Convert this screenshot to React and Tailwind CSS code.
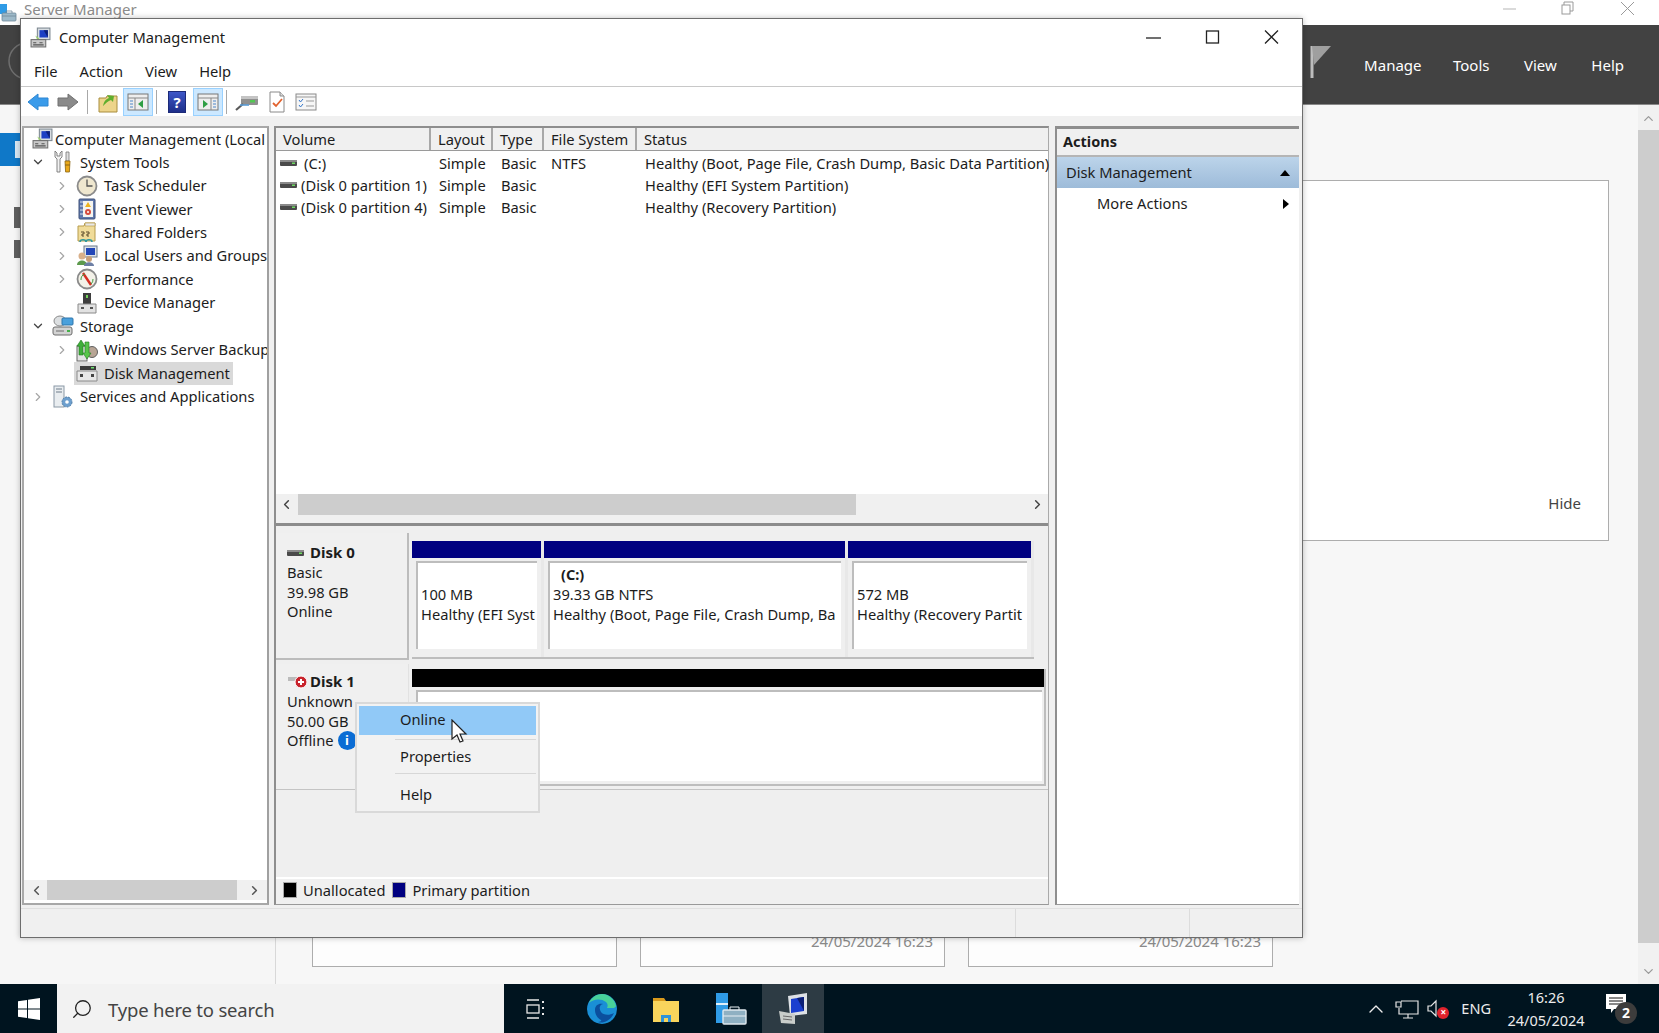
import React from "react";
import { ChevronRight, ChevronDown, ChevronLeft, ChevronUp, Search } from "lucide-react";

const PC = ({ s = 20 }) => (
  <svg width={s} height={s} viewBox="0 0 20 20" className="shrink-0">
    <rect x="7" y="1" width="12" height="11" fill="#d8dde2" stroke="#7c8790" />
    <path d="M9 3h8v7H9z" fill="#1c3fc4" />
    <path d="M13 3h4v7z" fill="#0c1f7a" />
    <path d="M5 8l4 3-2 1z" fill="#9bd06a" />
    <rect x="1" y="12" width="14" height="7" fill="#c9c9c9" stroke="#6e6e6e" />
    <path d="M3 15h3M9 15h3M3 17h10" stroke="#555" />
  </svg>
);
const Tools = () => (
  <svg width="22" height="24" viewBox="0 0 22 24" className="shrink-0">
    <path d="M3 1v6l2 2v13h3V9l2-2V1l-2 2v3H5V3z" fill="#f2f2f2" stroke="#777" strokeWidth=".9" />
    <path d="M14 2h3v9h-3z" fill="#e0e0e0" stroke="#777" strokeWidth=".8" />
    <path d="M13 11h5l-.6 11h-3.8z" fill="#eaa91a" stroke="#8a6512" strokeWidth=".8" />
    <path d="M13 15h5" stroke="#8a6512" />
  </svg>
);
const Clock = () => (
  <svg width="22" height="22" viewBox="0 0 22 22" className="shrink-0">
    <circle cx="11" cy="11" r="9.5" fill="#efe7cf" stroke="#8b8b8b" strokeWidth="1.8" />
    <path d="M11 4.5V11h5.5" stroke="#565656" strokeWidth="1.3" fill="none" />
  </svg>
);
const Evt = () => (
  <svg width="20" height="22" viewBox="0 0 20 22" className="shrink-0">
    <rect x="2" y="1" width="16" height="20" rx="1" fill="#5f78ad" stroke="#3e5078" />
    <rect x="6" y="3" width="10" height="16" fill="#f5f5f0" />
    <path d="M3 4h3M3 8h3M3 12h3M3 16h3" stroke="#d9e0ee" />
    <path d="M11 4l3 5H8z" fill="#eeb31e" />
    <circle cx="11" cy="14" r="3" fill="#d64b3d" />
    <circle cx="11" cy="14" r="1" fill="#fff" />
  </svg>
);
const Folder = () => (
  <svg width="20" height="22" viewBox="0 0 20 22" className="shrink-0">
    <path d="M1 5h6l1-3h10v18H1z" fill="#f0dc9a" stroke="#b79c4c" />
    <path d="M8 2h10v3H8z" fill="#e8e8e8" stroke="#b79c4c" strokeWidth=".7" />
    <path d="M4 11h3v2H5v2h2M9 11h3v2h-2v2h2" stroke="#5a4a2a" strokeWidth="1" fill="none" />
    <path d="M3 21c0-3 6-3 6 0M9 21c0-3 6-3 6 0" fill="none" stroke="#2f9a9f" strokeWidth="1.6" />
  </svg>
);
const Users = () => (
  <svg width="22" height="22" viewBox="0 0 22 22" className="shrink-0">
    <rect x="8" y="1" width="13" height="11" fill="#dde3ea" stroke="#6a7a8a" />
    <rect x="10" y="3" width="9" height="7" fill="#2347b8" />
    <circle cx="6" cy="11" r="3.5" fill="#d9b08a" />
    <path d="M1 20c0-6 10-6 10 0z" fill="#5d9a4d" />
    <circle cx="13" cy="14" r="3" fill="#c79f7a" />
    <path d="M8 21c0-5 10-5 10 0z" fill="#6d7fa5" />
  </svg>
);
const Perf = () => (
  <svg width="22" height="22" viewBox="0 0 22 22" className="shrink-0">
    <circle cx="11" cy="11" r="9.5" fill="#f3f1e8" stroke="#8a8a8a" strokeWidth="1.8" />
    <path d="M7 5l8 12" stroke="#d52d22" strokeWidth="2.4" />
    <path d="M5 12a6 6 0 0 1 4-6M17 11a6 6 0 0 1-2 5" stroke="#3d9a3d" fill="none" />
  </svg>
);
const Dev = () => (
  <svg width="20" height="22" viewBox="0 0 20 22" className="shrink-0">
    <rect x="6" y="1" width="8" height="11" fill="#3d3d3d" />
    <rect x="9" y="3" width="2" height="3" fill="#73d35c" />
    <path d="M1 12h18v9H1z" fill="#e2e2e2" stroke="#8a8a8a" />
    <path d="M4 15h3v2H4zM13 15h3v2h-3z" fill="#555" />
  </svg>
);
const Storage = () => (
  <svg width="22" height="22" viewBox="0 0 22 22" className="shrink-0">
    <ellipse cx="8" cy="6" rx="6" ry="5" fill="#dcdfe1" stroke="#8a8a8a" />
    <rect x="10" y="3" width="11" height="7" rx="1" fill="#4aa0dc" stroke="#2f76ad" />
    <rect x="1" y="12" width="19" height="8" rx="2" fill="#d3d3d3" stroke="#6c6c6c" />
    <path d="M4 16h8" stroke="#6c6c6c" />
    <rect x="15" y="15" width="3" height="2" fill="#46b04a" />
  </svg>
);
const Backup = () => (
  <svg width="22" height="24" viewBox="0 0 22 24" className="shrink-0">
    <circle cx="16" cy="14" r="5.5" fill="#b8a595" stroke="#5f5f5f" />
    <rect x="1" y="8" width="10" height="15" fill="#e3e3e3" stroke="#666" />
    <path d="M5 2l4 6H7v9H3V8H1z" fill="#3fae3a" stroke="#1f7a1f" strokeWidth=".6" />
    <path d="M11 21l-4-6h2V4h4v11h2z" fill="#58c54a" stroke="#1f7a1f" strokeWidth=".6" />
  </svg>
);
const DiskIcon = () => (
  <svg width="22" height="20" viewBox="0 0 22 20" className="shrink-0">
    <path d="M4 3h16v4H4z" fill="#3a3a3a" />
    <path d="M15 4h3v1.5h-3z" fill="#6fe06f" />
    <path d="M1 8h20v10H1z" fill="#e8e8e8" stroke="#8a8a8a" />
    <path d="M4 11h3v3H4zM15 11h3v3h-3z" fill="#444" />
  </svg>
);
const Srv = () => (
  <svg width="22" height="24" viewBox="0 0 22 24" className="shrink-0">
    <rect x="2" y="1" width="10" height="21" fill="#e9edf0" stroke="#8a98a5" />
    <path d="M4 4h6M4 7h6" stroke="#6f7d8a" />
    <circle cx="15" cy="17" r="5" fill="#6d9fce" stroke="#4f7ea8" strokeDasharray="2 1" />
    <circle cx="15" cy="17" r="1.8" fill="#fff" />
  </svg>
);
const Vol = () => (
  <svg width="18" height="8" viewBox="0 0 18 8" className="shrink-0">
    <rect x="0" y="1" width="17" height="6" rx="1" fill="#4a4a4a" />
    <rect x="0" y="1" width="17" height="2" fill="#8a8a8a" />
    <rect x="12" y="3.5" width="3" height="1.5" fill="#6fdc62" />
  </svg>
);

const TreeRow = ({ indent, arrow, icon, label, selected }) => {
  const pad = indent === 1 ? "pl-[7px]" : "pl-[31px]";
  return (
    <div className={`flex items-center h-[23.45px] whitespace-nowrap ${pad}`}>
      <span className="w-[14px] flex justify-center shrink-0 text-[#a6a6a6]">
        {arrow === "r" && <ChevronRight size={16} strokeWidth={2} />}
        {arrow === "d" && <ChevronDown size={16} strokeWidth={2.2} className="text-[#444]" />}
      </span>
      <span className={`flex items-center ml-[5px] h-[23px] pr-[3px] ${selected ? "bg-[#d9d9d9]" : ""}`}>
        <span className="w-[26px] flex justify-center shrink-0">{icon}</span>
        <span className="ml-[4px] leading-[23px]">{label}</span>
      </span>
    </div>
  );
};

const tree = [
  { indent: 1, arrow: "d", icon: <Tools />, label: "System Tools" },
  { indent: 2, arrow: "r", icon: <Clock />, label: "Task Scheduler" },
  { indent: 2, arrow: "r", icon: <Evt />, label: "Event Viewer" },
  { indent: 2, arrow: "r", icon: <Folder />, label: "Shared Folders" },
  { indent: 2, arrow: "r", icon: <Users />, label: "Local Users and Groups" },
  { indent: 2, arrow: "r", icon: <Perf />, label: "Performance" },
  { indent: 2, icon: <Dev />, label: "Device Manager" },
  { indent: 1, arrow: "d", icon: <Storage />, label: "Storage" },
  { indent: 2, arrow: "r", icon: <Backup />, label: "Windows Server Backup" },
  { indent: 2, icon: <DiskIcon />, label: "Disk Management", selected: true },
  { indent: 1, arrow: "r", icon: <Srv />, label: "Services and Applications" },
];

const cols = [
  ["Volume", "w-[155px]"],
  ["Layout", "w-[62px]"],
  ["Type", "w-[51px]"],
  ["File System", "w-[93px]"],
  ["Status", "flex-1"],
];
const rows = [
  ["(C:)", "Simple", "Basic", "NTFS", "Healthy (Boot, Page File, Crash Dump, Basic Data Partition)"],
  ["(Disk 0 partition 1)", "Simple", "Basic", "", "Healthy (EFI System Partition)"],
  ["(Disk 0 partition 4)", "Simple", "Basic", "", "Healthy (Recovery Partition)"],
];

const Volume = ({ w, title, l1, l2 }) => (
  <div className={`${w} shrink-0 flex flex-col h-full border-r-[3px] border-[#e8e8e8]`}>
    <div className="h-[17px] bg-[#000080] shrink-0" />
    <div className="flex-1 mt-[3px] ml-[4px] mr-[4px] mb-[8px] bg-white border-l-2 border-t-2 border-[#bdbdbd] pl-[3px] pt-[1px] overflow-hidden whitespace-nowrap leading-[20px]">
      <div className="h-[20px] pl-[8px] font-bold text-[14.5px]">{title}</div>
      <div>{l1}</div>
      <div>{l2}</div>
    </div>
  </div>
);

const MgmtWindow = () => (
  <div className="absolute left-[20px] top-[18px] w-[1283px] h-[920px] bg-[#f0f0f0] border border-[#6d6d6d] flex flex-col text-[14.7px] text-[#1c1c1c] font-['Noto_Sans',sans-serif] shadow-[0_0_6px_rgba(0,0,0,0.25)]">
    <div className="h-[37px] bg-white flex items-center pl-[9px] shrink-0">
      <PC s={21} />
      <span className="ml-[8px]">Computer Management</span>
      <div className="ml-auto flex items-center text-[#111]">
        <svg width="59" height="20" viewBox="0 0 59 20"><path d="M21 10h15" stroke="#222" strokeWidth="1.3" /></svg>
        <svg width="59" height="20" viewBox="0 0 59 20"><rect x="22.5" y="3" width="12" height="12" fill="none" stroke="#222" strokeWidth="1.3" /></svg>
        <svg width="59" height="20" viewBox="0 0 59 20"><path d="M22 2.5l13 13M35 2.5L22 15.5" stroke="#222" strokeWidth="1.3" /></svg>
      </div>
    </div>
    <div className="h-[31px] bg-white flex items-center pl-[13px] gap-[22px] border-b border-[#c8c8c8] shrink-0">
      <span>File</span><span>Action</span><span>View</span><span>Help</span>
    </div>
    <div className="h-[29px] bg-white flex items-center pl-[5px] pt-[1px] shrink-0">
      <svg width="22" height="20" viewBox="0 0 22 20" className="ml-[1px]"><path d="M1 10l10-8v4h10v8H11v4z" fill="#3a9bea" stroke="#2d86d3" /></svg>
      <svg width="22" height="20" viewBox="0 0 22 20" className="ml-[8px]"><path d="M21 10l-10-8v4H1v8h10v4z" fill="#8a8a8a" stroke="#707070" /></svg>
      <span className="w-px h-[24px] bg-[#a8a8a8] ml-[8px]" />
      <svg width="20" height="22" viewBox="0 0 20 22" className="ml-[10px]">
        <path d="M1 7h7l1-2h10v16H1z" fill="#edd48a" stroke="#a88d3e" />
        <path d="M5 15c1-5 3-7 6-8L9 4l7 1-1 6-2-2c-3 1-5 3-8 6z" fill="#5fae2e" />
      </svg>
      <span className="w-[30px] h-[28px] ml-[5px] bg-[#cce8ff] border border-[#99d1ff] flex items-center justify-center">
        <svg width="22" height="20" viewBox="0 0 22 20"><rect x="1" y="2" width="20" height="16" fill="#eeeeee" stroke="#777" /><path d="M1 6h20M8 6v12" stroke="#888" /><path d="M3 9h3M3 12h3M3 15h3" stroke="#4d86c9" /><path d="M16 8l-5 4 5 4z" fill="#2f9e44" /></svg>
      </span>
      <span className="w-px h-[24px] bg-[#a8a8a8] ml-[3px]" />
      <span className="w-[18px] h-[22px] ml-[11px] bg-gradient-to-b from-[#3d57c8] to-[#1e2f8a] border border-[#1c2a78] text-white text-[15px] font-bold leading-[20px] text-center">?</span>
      <span className="w-[30px] h-[28px] ml-[7px] bg-[#cce8ff] border border-[#99d1ff] flex items-center justify-center">
        <svg width="22" height="20" viewBox="0 0 22 20"><rect x="1" y="2" width="20" height="16" fill="#eeeeee" stroke="#777" /><path d="M1 6h20M14 6v12" stroke="#888" /><path d="M16 9h3M16 12h3M16 15h3" stroke="#4d86c9" /><path d="M6 8l5 4-5 4z" fill="#2f9e44" /></svg>
      </span>
      <span className="w-px h-[24px] bg-[#a8a8a8] ml-[3px]" />
      <svg width="24" height="20" viewBox="0 0 24 20" className="ml-[8px]">
        <rect x="6" y="4" width="17" height="9" rx="1" fill="#8f8f8f" />
        <rect x="6" y="4" width="17" height="3" fill="#c4c4c4" />
        <rect x="15" y="8" width="5" height="2.5" fill="#53c653" />
        <path d="M1 18l7-6" stroke="#5a5a5a" strokeWidth="2.2" />
        <path d="M5 13h9" stroke="#5a9bd5" strokeWidth="1.6" />
      </svg>
      <svg width="18" height="22" viewBox="0 0 18 22" className="ml-[9px]"><path d="M2 1h10l4 4v16H2z" fill="#fff" stroke="#8a8a8a" /><path d="M12 1v4h4" fill="#ddd" stroke="#8a8a8a" /><path d="M5 12l3 3 6-7" fill="none" stroke="#e2622e" strokeWidth="1.8" /></svg>
      <svg width="22" height="18" viewBox="0 0 22 18" className="ml-[9px]"><rect x="1" y="1" width="20" height="16" fill="#f6f6f6" stroke="#8a8a8a" /><path d="M1 4h20" stroke="#999" /><path d="M4 7l1.5 2L8 6M4 12l1.5 2L8 11" stroke="#3576c9" fill="none" /><path d="M11 8h8M11 13h8" stroke="#999" /></svg>
    </div>
    <div className="flex-1 min-h-0 flex pl-[1px] pt-[10px] gap-[5px]">
      <div className="w-[247px] h-[779px] bg-white border-2 border-[#a8a8a8] border-r-[#a0a0a0] flex flex-col shrink-0 overflow-hidden">
        <div className="flex items-center h-[23.45px] pl-[8px] whitespace-nowrap mt-[-1px]">
          <PC s={21} />
          <span className="ml-[2px]">Computer Management (Local</span>
        </div>
        {tree.map((t) => <TreeRow key={t.label} {...t} />)}
        <div className="mt-auto h-[20px] bg-[#f0f0f0] flex items-center justify-between px-[5px] text-[#555] mb-[3px]">
          <ChevronLeft size={15} strokeWidth={2.4} />
          <div className="w-[190px] h-[20px] bg-[#cdcdcd] -ml-[31px] translate-x-[12px]" />
          <ChevronRight size={15} strokeWidth={2.4} />
        </div>
      </div>

      <div className="w-[775px] h-[779px] flex flex-col shrink-0 border-l-2 border-[#8e8e8e] border-t-2 border-r border-r-[#aaa] border-b border-b-[#999]">
        <div className="h-[387px] bg-white flex flex-col shrink-0">
          <div className="h-[23px] flex bg-[#f0f0f0] border-b border-[#9a9a9a] shrink-0">
            {cols.map(([c, w]) => (
              <div key={c} className={`${w} pl-[7px] border-r-2 border-[#a8a8a8] leading-[22px] last:border-r-0 shrink-0`}>{c}</div>
            ))}
          </div>
          <div className="flex-1 pt-[1px]">
            {rows.map((r) => (
              <div key={r[0]} className="flex h-[22.2px] items-center whitespace-nowrap">
                <div className="w-[155px] flex items-center pl-[4px] shrink-0">
                  <Vol />
                  <span className={r[0] === "(C:)" ? "ml-[6px]" : "ml-[3px]"}>{r[0]}</span>
                </div>
                <div className="w-[62px] pl-[8px] shrink-0">{r[1]}</div>
                <div className="w-[51px] pl-[8px] shrink-0">{r[2]}</div>
                <div className="w-[93px] pl-[7px] shrink-0">{r[3]}</div>
                <div className="pl-[8px] shrink-0">{r[4]}</div>
              </div>
            ))}
          </div>
          <div className="h-[21px] bg-[#f0f0f0] flex items-center justify-between px-[3px] text-[#444] shrink-0">
            <ChevronLeft size={15} strokeWidth={2.4} />
            <div className="w-[558px] h-[21px] bg-[#cdcdcd] mr-[171px] ml-[1px]" />
            <ChevronRight size={15} strokeWidth={2.4} />
          </div>
        </div>
        <div className="h-[11px] bg-[#f0f0f0] border-b-[3px] border-[#8c8c8c] shrink-0" />
        <div className="flex-1 min-h-0 flex flex-col bg-[#efefef]">
          <div className="flex h-[127px] mt-[7px] shrink-0">
            <div className="w-[133px] h-full bg-[#f0f0f0] border-r-2 border-b-2 border-[#bcbcbc] pl-[11px] pt-[10px] leading-[19.6px] shrink-0">
              <div className="flex items-center font-bold text-[15px] h-[20px]"><span className="mr-[5px]"><Vol /></span>Disk 0</div>
              <div>Basic</div><div>39.98 GB</div><div>Online</div>
            </div>
            <div className="flex-1 flex pl-[3px] pt-[8px] pb-[1px] pr-[11px]">
              <div className="flex w-[622px] h-full border-r-2 border-b-2 border-[#bdbdbd]">
                <Volume w="w-[132px]" title="" l1="100 MB" l2="Healthy (EFI Syst" />
                <Volume w="w-[304px]" title="(C:)" l1="39.33 GB NTFS" l2="Healthy (Boot, Page File, Crash Dump, Ba" />
                <Volume w="w-[186px]" title="" l1="572 MB" l2="Healthy (Recovery Partit" />
              </div>
            </div>
          </div>
          <div className="flex h-[126px] mt-[4px] shrink-0 border-b border-[#c4c4c4]">
            <div className="w-[133px] h-full bg-[#f0f0f0] pl-[11px] pt-[8px] leading-[19.6px] border-r border-[#e2e2e2] shrink-0">
              <div className="flex items-center font-bold text-[15px] h-[20px]">
                <svg width="20" height="14" viewBox="0 0 20 14" className="mr-[3px]">
                  <rect x="1" y="2" width="10" height="4" fill="#bbb" />
                  <circle cx="14" cy="7" r="6" fill="#c8232c" stroke="#fff" />
                  <path d="M11 7h6M14 4v6" stroke="#fff" strokeWidth="2" />
                </svg>
                Disk 1
              </div>
              <div>Unknown</div><div>50.00 GB</div>
              <div className="flex items-center">Offline<span className="ml-[4px] w-[19px] h-[19px] rounded-full bg-[#0a6cd4] text-white text-[13px] font-bold flex items-center justify-center">i</span></div>
            </div>
            <div className="flex-1 flex flex-col pl-[3px] pt-[5px] pr-[2px] pb-[3px]">
              <div className="flex-1 flex flex-col border-r-2 border-b-2 border-[#bdbdbd]">
                <div className="h-[18px] bg-black shrink-0" />
                <div className="flex-1 mt-[3px] ml-[4px] mr-[2px] mb-[3px] bg-white border-l-2 border-t-2 border-[#bdbdbd]" />
              </div>
            </div>
          </div>
          <div className="flex-1 min-h-0" />
          <div className="h-[27px] bg-[#f0f0f0] border-t-2 border-white flex items-center pl-[7px] pb-[3px] shrink-0">
            <span className="w-[14px] h-[16px] bg-black border border-[#aaa]" />
            <span className="ml-[6px]">Unallocated</span>
            <span className="ml-[7px] w-[14px] h-[16px] bg-[#000080] border border-[#aaa]" />
            <span className="ml-[6px]">Primary partition</span>
          </div>
        </div>
      </div>

      <div className="w-[244px] ml-[1px] h-[779px] bg-white border-l-2 border-t-[3px] border-[#8e8e8e] border-b border-b-[#999] flex flex-col shrink-0">
        <div className="h-[28px] bg-[#f0f0f0] border-b-2 border-[#b5b5b5] pl-[6px] font-bold text-[14.5px] leading-[25px]">Actions</div>
        <div className="h-[31px] bg-gradient-to-b from-[#bcd4ea] to-[#9dbbd9] pl-[9px] pr-[8px] flex items-center justify-between">
          <span>Disk Management</span>
          <svg width="12" height="8" viewBox="0 0 12 8"><path d="M6 1l5 6H1z" fill="#000" /></svg>
        </div>
        <div className="h-[31px] pl-[40px] pr-[9px] flex items-center justify-between">
          <span>More Actions</span>
          <svg width="8" height="12" viewBox="0 0 8 12"><path d="M1 1l6 5-6 5z" fill="#000" /></svg>
        </div>
      </div>
    </div>
    <div className="h-[29px] bg-[#f0f0f0] border-t border-[#e0e0e0] flex shrink-0">
      <div className="flex-1" />
      <div className="w-[174px] border-l border-[#dcdcdc]" />
      <div className="w-[113px] border-l border-[#dcdcdc]" />
    </div>
  </div>
);

const Taskbar = () => (
  <div className="h-[49px] bg-[#00141f] flex items-center shrink-0 text-white">
    <div className="w-[57px] flex items-center justify-center">
      <svg width="22" height="22" viewBox="0 0 22 22"><path d="M0 3.2l9-1.3v8.6H0zM10 1.8L22 0v10.5H10zM0 11.5h9v8.6L0 18.8zM10 11.5h12V22l-12-1.8z" fill="#fff" /></svg>
    </div>
    <div className="w-[447px] h-full bg-[#f2f2f2] flex items-center pl-[14px] text-[#444] text-[18.5px] font-['Noto_Sans',sans-serif]">
      <Search size={22} strokeWidth={1.4} className="-scale-x-100 text-[#222]" />
      <span className="ml-[15px] tracking-[-0.2px] mt-[2px]">Type here to search</span>
    </div>
    <div className="w-[58px] flex justify-center ml-[3px]">
      <svg width="22" height="22" viewBox="0 0 22 22" fill="none" stroke="#e8e8e8" strokeWidth="1.3"><path d="M2 2h12M2 20h12" /><rect x="2" y="7" width="12" height="8" /><path d="M18 3v2M18 9v2M18 15v2" strokeWidth="2" /></svg>
    </div>
    <div className="w-[64px] ml-[5px] flex justify-center">
      <svg width="32" height="32" viewBox="0 0 32 32">
        <circle cx="16" cy="16" r="15" fill="#1a8fd6" />
        <path d="M30 13c-1-6-7-12-14-12C10 1 5 5 3 10c4-4 12-5 17-1 2 2 2 4 1 6h7c1-1 2-1 2-2z" fill="#48d19a" />
        <path d="M9 17c0-5 4-7 8-6-4 1-4 5-2 8s8 4 13 1c-3 7-10 11-16 9 2 0 4-1 3-2-4-2-6-6-6-10z" fill="#0b4f9e" />
      </svg>
    </div>
    <div className="w-[64px] flex justify-center">
      <svg width="30" height="28" viewBox="0 0 30 28">
        <path d="M2 3h11l2 3h13v5H2z" fill="#d99a1c" />
        <rect x="2" y="6" width="26" height="21" fill="#f9d55c" />
        <path d="M10 20h10v7h-3v-4h-4v4h-3z" fill="#2f93d8" />
      </svg>
    </div>
    <div className="w-[64px] flex justify-center">
      <svg width="34" height="34" viewBox="0 0 34 34">
        <rect x="3" y="1" width="12" height="30" fill="#2f9be6" />
        <rect x="3" y="11" width="12" height="2" fill="#dfeffa" />
        <rect x="10" y="18" width="23" height="14" rx="1" fill="#8fb0c2" stroke="#dfe8ee" strokeWidth="1.4" />
        <path d="M17 18v-3h9v3M10 24h23" stroke="#e7eef3" fill="none" />
      </svg>
    </div>
    <div className="w-[62px] h-full bg-[#2d3b44] flex justify-center items-center">
      <svg width="34" height="34" viewBox="0 0 34 34">
        <path d="M12 4l19-3v21l-17 2z" fill="#dde1e5" />
        <path d="M15 7l13-2v14l-13 2z" fill="#1a3fcf" />
        <path d="M21 6l7-1v14z" fill="#0b1f76" />
        <path d="M3 19l16 3v10L5 31z" fill="#c9cdca" />
        <path d="M7 24l9 1M7 27l9 1" stroke="#6a6a6a" />
      </svg>
    </div>
    <div className="ml-auto flex items-center h-full font-['Noto_Sans',sans-serif] text-[#ececec] text-[14.5px]">
      <ChevronUp size={24} strokeWidth={1.4} />
      <svg width="24" height="22" viewBox="0 0 24 22" fill="none" stroke="#e5e5e5" strokeWidth="1.2" className="ml-[7px]"><path d="M1 4h5v5H1zM6 3h17v13H4v-6M13 16v4M8 20h10" /></svg>
      <span className="relative ml-[7px] mr-[9px]">
        <svg width="26" height="22" viewBox="0 0 26 22" fill="none" stroke="#e5e5e5" strokeWidth="1.2"><path d="M2 8h3l5-5v15l-5-5H2z" /></svg>
        <span className="absolute left-[11px] top-[9px] w-[12px] h-[12px] rounded-full bg-[#e0222c] text-white text-[10px] font-bold leading-[11px] text-center">×</span>
      </span>
      <span>ENG</span>
      <div className="w-[98px] ml-[6px] text-center leading-[23px]">
        <div>16:26</div>
        <div>24/05/2024</div>
      </div>
      <span className="relative ml-[10px] mr-[22px] w-[32px] h-[32px]">
        <svg width="22" height="22" viewBox="0 0 22 22" className="absolute left-0 top-0"><path d="M1 1h20v15H9l-3 4v-4H1z" fill="#fff" /><path d="M4 5h14M4 8h14M4 11h14" stroke="#111" strokeWidth="1" /></svg>
        <span className="absolute left-[10px] top-[9px] w-[22px] h-[22px] rounded-full bg-[#3c3c3c] text-white font-bold text-[14px] text-center leading-[22px]">2</span>
      </span>
    </div>
  </div>
);

const DateCard = ({ date }) => (
  <div className="w-[305px] h-[407px] bg-[#fdfdfd] border border-[#adadad] flex flex-col justify-end items-end shrink-0 pr-[11px] pb-[14px] text-[15px] text-[#8a8a8a]">{date}</div>
);

export default function App() {
  return (
    <div className="relative w-[1659px] h-[1033px] overflow-hidden flex flex-col bg-[#f7f7f7] font-['Noto_Sans',sans-serif]">
      <div className="h-[25px] bg-white flex items-center shrink-0 text-[#8b8b8b] text-[15px]">
        <svg width="18" height="18" viewBox="0 0 18 18" className="mt-[1px]">
          <rect x="0" y="0" width="7" height="10" fill="#2f9be6" />
          <rect x="2" y="9" width="14" height="8" rx="1" fill="#9db9c9" stroke="#6f8899" strokeWidth=".8" />
          <path d="M6 9V7h6v2M2 12h14" stroke="#6f8899" fill="none" strokeWidth=".8" />
        </svg>
        <span className="ml-[6px] -mt-[6px]">Server Manager</span>
        <div className="ml-auto flex items-center -mt-[8px]">
          <svg width="15" height="15" viewBox="0 0 15 15"><path d="M1 8h13" stroke="#b5b5b5" /></svg>
          <svg width="15" height="15" viewBox="0 0 15 15" className="ml-[43px]" fill="none" stroke="#9a9a9a"><rect x="2" y="4" width="8" height="9" /><path d="M4 4V1h9v9h-3" /></svg>
          <svg width="15" height="15" viewBox="0 0 15 15" className="ml-[45px] mr-[24px]"><path d="M1 1l13 13M14 1L1 14" stroke="#9a9a9a" /></svg>
        </div>
      </div>
      <div className="h-[80px] bg-[#424242] border-b border-[#888] flex items-center justify-end shrink-0 text-white text-[15px] pr-[35px] gap-[34.5px]">
        <svg width="40" height="40" viewBox="0 0 40 40" className="ml-[8px] mr-auto -mt-[8px]"><circle cx="19" cy="20" r="18" fill="none" stroke="#6e6e6e" strokeWidth="1.5" /></svg>
        <svg width="24" height="34" viewBox="0 0 24 34" className="-mr-[3px] -mt-[5px]"><path d="M3 1v32" stroke="#bdbdbd" strokeWidth="3" /><path d="M3 1h19L5 20z" fill="#9f9f9f" /></svg>
        <span className="mt-[2px] -mr-[3px]">Manage</span><span className="mt-[2px]">Tools</span><span className="mt-[2px]">View</span><span className="mt-[2px]">Help</span>
      </div>
      <div className="flex-1 min-h-0 flex">
        <div className="w-[276px] bg-[#f6f6f6] border-r border-[#d8d8d8] shrink-0 pt-[28px] flex flex-col items-start">
          <div className="w-full h-[33px] bg-[#0f78c8] pl-[15px] pt-[8px]"><span className="block w-[5px] h-[17px] bg-[#d8e8f4]" /></div>
          <div className="w-[20px] h-[21px] mt-[41px] flex justify-end"><span className="w-[6px] h-full bg-[#5f5f5f]" /></div>
          <div className="w-[20px] h-[18px] mt-[12px] flex justify-end"><span className="w-[6px] h-full bg-[#5f5f5f]" /></div>
        </div>
        <div className="flex-1 pl-[36px] pt-[75px] flex flex-col min-w-0">
          <div className="w-[1297px] h-[361px] bg-white border border-[#adadad] flex items-end justify-end pr-[27px] pb-[26px] text-[15px] text-[#444] shrink-0">Hide</div>
          <div className="flex gap-[23px] mt-[19px]">
            <DateCard date="" /><DateCard date="24/05/2024 16:23" /><DateCard date="24/05/2024 16:23" />
          </div>
        </div>
        <div className="w-[21px] shrink-0 bg-[#f1f1f1] flex flex-col items-center text-[#999]">
          <ChevronUp size={15} className="mt-[4px] h-[19px]" />
          <div className="w-full flex-1 bg-[#cdcdcd] mt-[2px] mb-[21px]" />
          <ChevronDown size={15} className="mb-[5px]" />
        </div>
      </div>
      <Taskbar />
      <MgmtWindow />
      <div className="absolute left-[355px] top-[702px] w-[185px] h-[111px] bg-[#f2f2f2] border-2 border-[#d9d9d9] px-[2px] pt-[2px] flex flex-col text-[14.7px] text-[#1c1c1c] font-['Noto_Sans',sans-serif]">
        <div className="h-[29px] bg-[#91c9f7] pl-[41px] leading-[26px] shrink-0">Online</div>
        <div className="h-px bg-[#d7d7d7] ml-[36px] mt-[4px] shrink-0" />
        <div className="h-[33px] pl-[41px] leading-[33px] shrink-0">Properties</div>
        <div className="h-px bg-[#d7d7d7] ml-[36px] shrink-0" />
        <div className="h-[33px] pl-[41px] leading-[40px] shrink-0">Help</div>
      </div>
      <svg width="18" height="26" viewBox="0 0 18 26" className="absolute left-[451px] top-[719px]">
        <path d="M1 1v19l5-4 3 7 3-1-3-7h6z" fill="#fff" stroke="#222" strokeWidth="1.2" />
      </svg>
    </div>
  );
}
